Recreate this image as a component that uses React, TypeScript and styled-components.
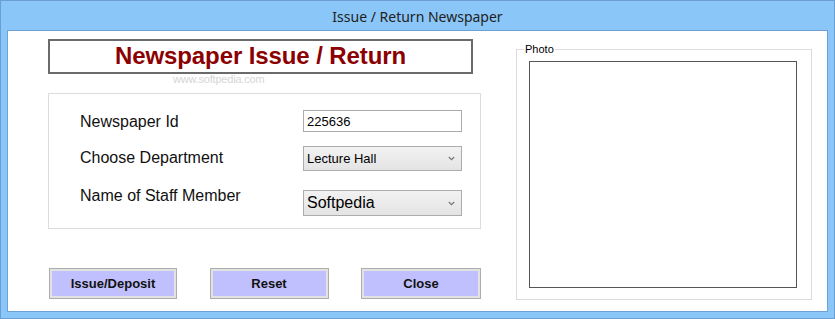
import styled, { createGlobalStyle } from 'styled-components'

const GlobalStyle = createGlobalStyle`
  body {
    margin: 0;
    font-family: 'Liberation Sans', Arial, sans-serif;
  }
`

const ChevronDown = () => (
  <svg width="7" height="5" viewBox="0 0 7 5">
    <path d="M0.8 1 L3.5 3.7 L6.2 1" fill="none" stroke="#777" strokeWidth="1.2" />
  </svg>
)

const App = () => {
  return (
    <>
      <GlobalStyle />
      <Window>
        <TitleBar>Issue / Return Newspaper</TitleBar>
        <Client>
          <LeftColumn>
            <HeadingBox>Newspaper Issue / Return</HeadingBox>
            <Watermark>www.softpedia.com</Watermark>

            <FormPanel>
              <Row $top={0}>
                <Label $shift={3}>Newspaper Id</Label>
                <TextInput defaultValue="225636" />
              </Row>
              <Row $top={14}>
                <Label $shift={3}>Choose Department</Label>
                <SelectBox $height={25} $size={13}>
                  <span>Lecture Hall</span>
                  <ChevronDown />
                </SelectBox>
              </Row>
              <Row $top={19}>
                <Label $shift={-3}>Name of Staff Member</Label>
                <SelectBox $height={26} $size={16}>
                  <span>Softpedia</span>
                  <ChevronDown />
                </SelectBox>
              </Row>
            </FormPanel>

            <ButtonRow>
              <ActionButton $width={128}>Issue/Deposit</ActionButton>
              <ActionButton $width={119}>Reset</ActionButton>
              <ActionButton $width={120}>Close</ActionButton>
            </ButtonRow>
          </LeftColumn>

          <PhotoGroup>
            <PhotoLegend>Photo</PhotoLegend>
            <PhotoFrame />
          </PhotoGroup>
        </Client>
      </Window>
    </>
  )
}

export default App

const Window = styled.div`
    width: 835px;
    height: 319px;
    box-sizing: border-box;
    display: flex;
    flex-direction: column;
    padding: 0 6px 6px 6px;
    background: #8bc6f8;
    border: 1px solid #6b9fd3;
`

const TitleBar = styled.div`
    height: 29px;
    display: flex;
    align-items: center;
    justify-content: center;
    padding-top: 1px;
    box-sizing: border-box;
    font-family: 'Noto Sans', sans-serif;
    font-size: 14px;
    color: #222;
`

const Client = styled.div`
    flex: 1;
    display: flex;
    gap: 35px;
    padding-left: 40px;
    background: #fff;
    border: 1px solid #6ea2d6;
`

const LeftColumn = styled.div`
    position: relative;
    width: 433px;
    display: flex;
    flex-direction: column;
    padding-top: 8px;
`

const HeadingBox = styled.div`
    width: 425px;
    height: 35px;
    box-sizing: border-box;
    display: flex;
    align-items: center;
    justify-content: center;
    padding-bottom: 2px;
    border: 2px solid #6a6a6a;
    font-size: 24px;
    letter-spacing: -0.1px;
    font-weight: bold;
    color: #8b0000;
`

const Watermark = styled.span`
    position: absolute;
    left: 125px;
    top: 42px;
    font-size: 11px;
    letter-spacing: -0.2px;
    color: #d6d6d6;
`

const FormPanel = styled.div`
    margin-top: 19px;
    height: 136px;
    box-sizing: border-box;
    padding: 16px 0 0 31px;
    border: 1px solid #dcdcdc;
`

const Row = styled.div<{ $top: number }>`
    display: grid;
    grid-template-columns: 223px 159px;
    align-items: start;
    margin-top: ${p => p.$top}px;
`

const Label = styled.span<{ $shift: number }>`
    margin-top: ${p => p.$shift}px;
    font-size: 16px;
    line-height: 18px;
    color: #111;
`

const TextInput = styled.input`
    width: 159px;
    height: 22px;
    box-sizing: border-box;
    margin: 0;
    padding: 0 3px;
    border: 1px solid #ababab;
    font-family: 'Liberation Sans', Arial, sans-serif;
    font-size: 13px;
    color: #000;
    outline: none;
`

const SelectBox = styled.div<{ $height: number; $size: number }>`
    height: ${p => p.$height}px;
    box-sizing: border-box;
    display: flex;
    align-items: center;
    justify-content: space-between;
    padding: 0 6px 0 3px;
    border: 1px solid #acacac;
    background: linear-gradient(#f2f2f2, #e4e4e4);
    font-size: ${p => p.$size}px;
    color: #000;
`

const ButtonRow = styled.div`
    margin-top: 39px;
    display: flex;
    justify-content: space-between;
    padding-left: 1px;
`

const ActionButton = styled.button<{ $width: number }>`
    width: ${p => p.$width}px;
    height: 31px;
    margin: 0;
    padding: 0;
    border: 1px solid #adadad;
    box-shadow: inset 0 0 0 2px #e2e2e2;
    background: #c0c0fe;
    font-family: 'Liberation Sans', Arial, sans-serif;
    font-size: 13px;
    font-weight: bold;
    color: #111;
`

const PhotoGroup = styled.fieldset`
    width: 296px;
    height: 257px;
    box-sizing: border-box;
    margin: 12px 0 0 0;
    padding: 6px 14px 10px 12px;
    border: 1px solid #dcdcdc;
`

const PhotoLegend = styled.legend`
    margin-left: -5px;
    padding: 0 1px;
    font-size: 11px;
    line-height: 12px;
    color: #000;
`

const PhotoFrame = styled.div`
    width: 268px;
    height: 227px;
    box-sizing: border-box;
    border: 1px solid #555;
`
